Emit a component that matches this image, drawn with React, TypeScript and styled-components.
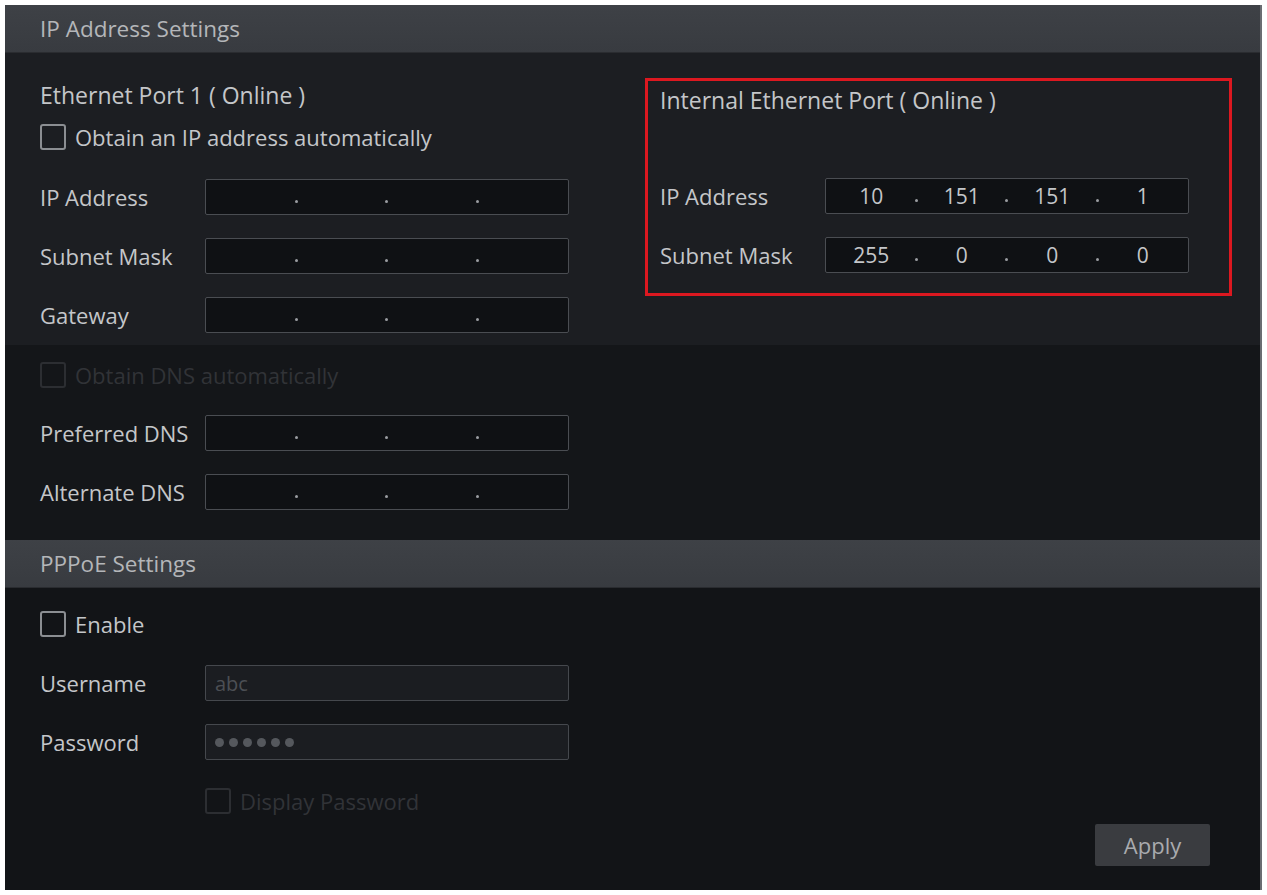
import React from "react";
import styled, { createGlobalStyle } from "styled-components";

const GlobalStyle = createGlobalStyle`
  body {
    margin: 0;
    background: #ffffff;
    font-family: "Open Sans", "Noto Sans", sans-serif;
  }
`;

const Page = styled.div`
  padding: 5px 0 0 5px;
`;

const Panel = styled.div`
  width: 1257px;
  height: 885px;
  background: #121417;
  display: flex;
  flex-direction: column;
  border-right: 2px solid #6a6d72;
  box-sizing: border-box;
`;

const SectionHeader = styled.div`
  height: 48px;
  flex-shrink: 0;
  background: linear-gradient(#3e4146, #383b40);
  display: flex;
  align-items: center;
  padding-left: 35px;
  font-size: 22.5px;
  color: #b4b6b9;
  border-bottom: 1px solid #2a2c30;
  box-sizing: border-box;
`;

const UpperArea = styled.div`
  height: 292px;
  flex-shrink: 0;
  box-sizing: border-box;
  background: #1c1e22;
  display: grid;
  grid-template-columns: 605px 587px;
  padding-left: 35px;
`;

const Column = styled.div`
  display: flex;
  flex-direction: column;
`;

const LowerArea = styled.div`
  height: 195px;
  flex-shrink: 0;
  box-sizing: border-box;
  background: #141619;
  padding: 16px 0 0 35px;
  display: flex;
  flex-direction: column;
`;

const BottomArea = styled.div`
  flex: 1;
  background: #121417;
  padding: 22px 50px 0 35px;
  display: flex;
  flex-direction: column;
`;

const Title = styled.div<{ $top: number }>`
  height: 28px;
  line-height: 28px;
  margin-top: ${(p) => p.$top}px;
  font-size: 23px;
  color: #c4c6c9;
  white-space: nowrap;
`;

const CheckRow = styled.label<{ $top: number; $indent?: number; $disabled?: boolean }>`
  display: flex;
  align-items: center;
  gap: 9px;
  height: 28px;
  margin-top: ${(p) => p.$top}px;
  padding-left: ${(p) => p.$indent ?? 0}px;
  font-size: 22px;
  color: ${(p) => (p.$disabled ? "#313337" : "#c4c6c9")};
  white-space: nowrap;
`;

const Box = styled.span<{ $disabled?: boolean }>`
  width: 26px;
  height: 26px;
  box-sizing: border-box;
  border: 2px solid ${(p) => (p.$disabled ? "#2c2e32" : "#8b8e92")};
  border-radius: 3px;
  flex-shrink: 0;
`;

const FormRow = styled.div<{ $top: number }>`
  display: flex;
  align-items: center;
  margin-top: ${(p) => p.$top}px;
  height: 36px;
`;

const Label = styled.div`
  width: 165px;
  flex-shrink: 0;
  font-size: 22px;
  color: #c4c6c9;
  white-space: nowrap;
`;

const IpBox = styled.div`
  width: 364px;
  height: 36px;
  box-sizing: border-box;
  background: #0f1114;
  border: 1px solid #4a4d52;
  border-radius: 2px;
  display: grid;
  grid-template-columns: repeat(4, 1fr);
`;

const Octet = styled.div`
  position: relative;
  display: flex;
  align-items: center;
  justify-content: center;
  font-size: 21px;
  color: #c4c6c9;
  &:not(:last-child)::after {
    content: "";
    position: absolute;
    right: -1px;
    top: 20px;
    width: 3px;
    height: 3px;
    border-radius: 50%;
    background: #9a9da1;
  }
`;

const TextBox = styled.div`
  width: 364px;
  height: 36px;
  box-sizing: border-box;
  background: #1b1d21;
  border: 1px solid #45484d;
  border-radius: 2px;
  display: flex;
  align-items: center;
  padding-left: 9px;
  gap: 5px;
  font-size: 20px;
  color: #4c4f54;
`;

const Dot = styled.span`
  width: 9px;
  height: 9px;
  border-radius: 50%;
  background: #55585d;
`;

const RedFrame = styled.div`
  margin-top: 25px;
  height: 218px;
  box-sizing: border-box;
  border: 3px solid #dc1820;
  padding: 1px 0 0 12px;
  display: flex;
  flex-direction: column;
`;

const Footer = styled.div`
  display: flex;
  justify-content: flex-end;
  margin-top: 9px;
`;

const ApplyButton = styled.button`
  all: unset;
  width: 115px;
  height: 42px;
  background: #3a3c40;
  border-radius: 2px;
  display: flex;
  align-items: center;
  justify-content: center;
  font-family: "Open Sans", "Noto Sans", sans-serif;
  font-size: 22px;
  color: #a9abae;
`;

type IpFieldProps = { values?: string[] };

function IpField({ values = ["", "", "", ""] }: IpFieldProps) {
  return (
    <IpBox>
      {values.map((v, i) => (
        <Octet key={i}>{v}</Octet>
      ))}
    </IpBox>
  );
}

export default function App() {
  return (
    <Page>
      <GlobalStyle />
      <Panel>
        <SectionHeader>IP Address Settings</SectionHeader>
        <UpperArea>
          <Column>
            <Title $top={28}>Ethernet Port 1 ( Online )</Title>
            <CheckRow $top={14}>
              <Box />
              Obtain an IP address automatically
            </CheckRow>
            <FormRow $top={28}>
              <Label>IP Address</Label>
              <IpField />
            </FormRow>
            <FormRow $top={23}>
              <Label>Subnet Mask</Label>
              <IpField />
            </FormRow>
            <FormRow $top={23}>
              <Label>Gateway</Label>
              <IpField />
            </FormRow>
          </Column>
          <Column>
            <RedFrame>
              <Title $top={4}>Internal Ethernet Port ( Online )</Title>
              <FormRow $top={64}>
                <Label>IP Address</Label>
                <IpField values={["10", "151", "151", "1"]} />
              </FormRow>
              <FormRow $top={23}>
                <Label>Subnet Mask</Label>
                <IpField values={["255", "0", "0", "0"]} />
              </FormRow>
            </RedFrame>
          </Column>
        </UpperArea>
        <LowerArea>
          <CheckRow $top={0} $disabled>
            <Box $disabled />
            Obtain DNS automatically
          </CheckRow>
          <FormRow $top={26}>
            <Label>Preferred DNS</Label>
            <IpField />
          </FormRow>
          <FormRow $top={23}>
            <Label>Alternate DNS</Label>
            <IpField />
          </FormRow>
        </LowerArea>
        <SectionHeader>PPPoE Settings</SectionHeader>
        <BottomArea>
          <CheckRow $top={0}>
            <Box />
            Enable
          </CheckRow>
          <FormRow $top={27}>
            <Label>Username</Label>
            <TextBox>abc</TextBox>
          </FormRow>
          <FormRow $top={23}>
            <Label>Password</Label>
            <TextBox>
              {Array.from({ length: 6 }).map((_, i) => (
                <Dot key={i} />
              ))}
            </TextBox>
          </FormRow>
          <CheckRow $top={27} $indent={165} $disabled>
            <Box $disabled />
            Display Password
          </CheckRow>
          <Footer>
            <ApplyButton>Apply</ApplyButton>
          </Footer>
        </BottomArea>
      </Panel>
    </Page>
  );
}
